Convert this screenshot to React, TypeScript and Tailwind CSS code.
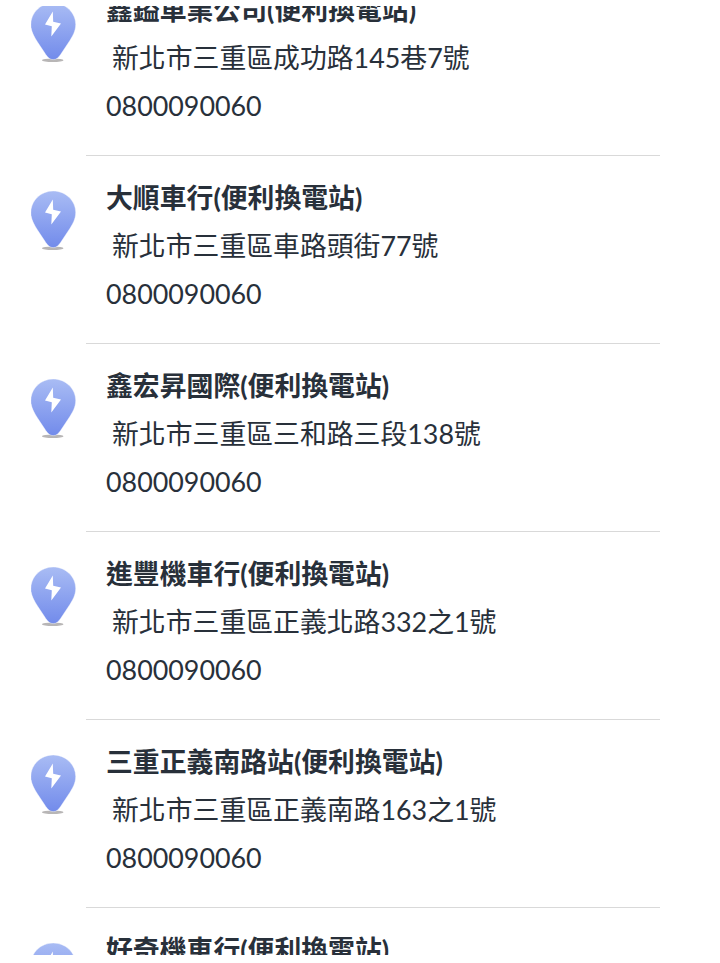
const stations = [
  { name: "鑫鎰車業公司(便利換電站)", address: "新北市三重區成功路145巷7號", phone: "0800090060" },
  { name: "大順車行(便利換電站)", address: "新北市三重區車路頭街77號", phone: "0800090060" },
  { name: "鑫宏昇國際(便利換電站)", address: "新北市三重區三和路三段138號", phone: "0800090060" },
  { name: "進豐機車行(便利換電站)", address: "新北市三重區正義北路332之1號", phone: "0800090060" },
  { name: "三重正義南路站(便利換電站)", address: "新北市三重區正義南路163之1號", phone: "0800090060" },
  { name: "好奇機車行(便利換電站)" },
];

const StationPin = () => (
  <svg width="46" height="62" viewBox="0 0 46 62" className="block">
    <defs>
      <linearGradient id="pin" x1="0" y1="0" x2="0" y2="1">
        <stop offset="0" stopColor="#a9bcf4" />
        <stop offset="1" stopColor="#728beb" />
      </linearGradient>
      <filter id="soft" x="-20%" y="-50%" width="140%" height="200%">
        <feGaussianBlur stdDeviation="0.6" />
      </filter>
    </defs>
    <ellipse cx="21.7" cy="57.2" rx="10.8" ry="1.8" fill="#b8b6b6" filter="url(#soft)" />
    <path
      d="M22.2 0C9.8 0 -0.2 9.6 -0.2 21.5C-0.2 28 3 33.5 6.5 39L14.8 51.5C17.2 55 19 56.6 22.2 56.6C25.4 56.6 27.2 55 29.6 51.5L37.9 39C41.5 33.5 44.7 28 44.7 21.5C44.7 9.6 34.6 0 22.2 0Z"
      fill="url(#pin)"
      stroke="#fff"
      strokeWidth="0.4"
    />
    <path d="M21.8 8.6L14 21.4L20.8 23.2L20.3 33.4L30 20.6L22.2 18.8Z" fill="#fff" />
  </svg>
);

const App = () => {
  return (
    <div className="h-screen overflow-hidden bg-white pt-[6px] pb-2">
      <div className="h-full overflow-hidden">
        <ul className="-mt-[38px] pl-[31px] pr-[60px] font-['Lato','Noto_Sans_CJK_TC',sans-serif] text-[26.85px] leading-[48px] text-[#28303a]">
          {stations.map((station) => (
            <li key={station.name} className="flex h-[188px]">
              <div className="w-[55px] shrink-0 pt-[35px]">
                <StationPin />
              </div>
              <div className="flex-1 border-b border-[#d9d9d9] pt-[18px] pl-5 whitespace-nowrap">
                <h2 className="h-12 font-bold">{station.name}</h2>
                <p className="h-12 pl-1.5">{station.address}</p>
                <p className="h-12">{station.phone}</p>
              </div>
            </li>
          ))}
        </ul>
      </div>
    </div>
  );
};

export default App;
